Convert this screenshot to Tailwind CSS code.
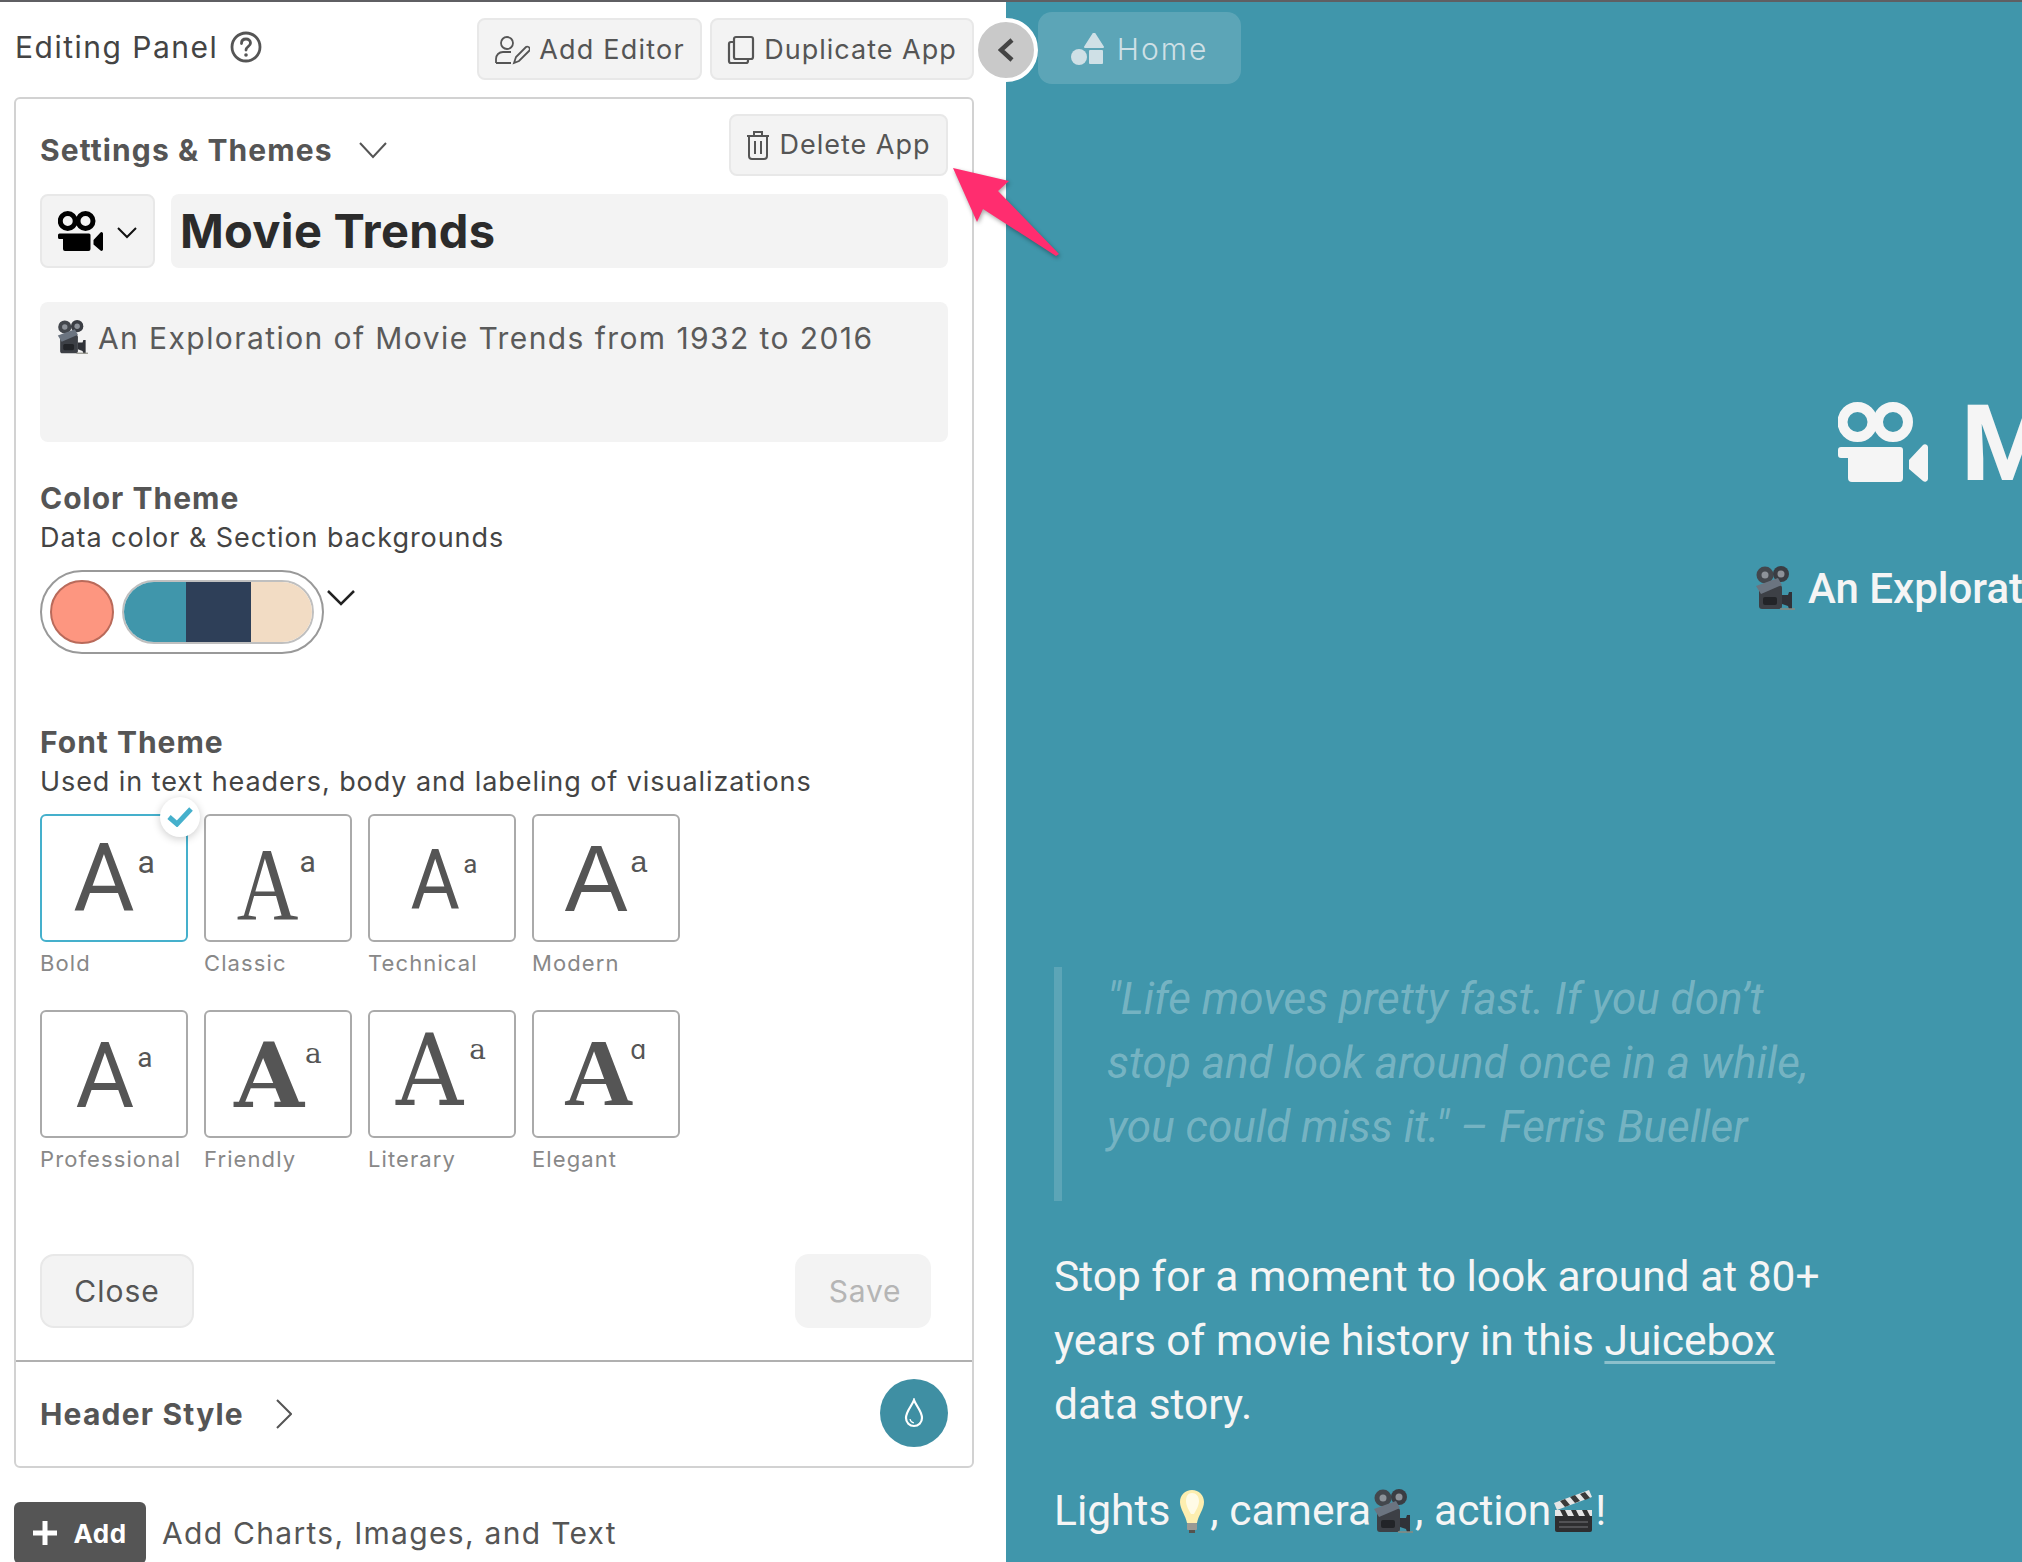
<!DOCTYPE html>
<html lang="en">
<head>
    <meta charset="UTF-8">
    <title>Movie Trends - Editing Panel</title>
    <script src="https://cdn.jsdelivr.net/npm/@tailwindcss/browser@4"></script>
</head>
<body class="h-[1562px] w-[2022px] overflow-hidden bg-white font-['Inter',sans-serif] text-[#555]">
    <!-- reusable pictures -->
    <svg class="absolute h-0 w-0">
        <symbol id="camIcon" viewBox="0 0 90 80">
            <circle cx="19.500" cy="20" r="15" fill="none" stroke="currentColor" stroke-width="10"/>
            <circle cx="55" cy="20" r="15" fill="none" stroke="currentColor" stroke-width="10"/>
            <path d="M3 45h59a3 3 0 0 1 3 3v28a4 4 0 0 1-4 4H14a4 4 0 0 1-4-4V56H3a3 3 0 0 1-3-3v-5a3 3 0 0 1 3-3z" fill="currentColor"/>
            <path d="M71 58l14-15a3 3 0 0 1 5 2v32a3 3 0 0 1-5 2L71 67z" fill="currentColor"/>
        </symbol>
        <symbol id="camEmoji" viewBox="0 0 42 44">
            <circle cx="11" cy="9" r="8.500" fill="#43474d"/>
            <circle cx="27" cy="8" r="8" fill="#3a3d43"/>
            <circle cx="11" cy="9" r="3.500" fill="#8d9299"/>
            <circle cx="27" cy="8" r="3.500" fill="#8d9299"/>
            <path d="M5 24l20-5c2 0 3 1 3 3v18c0 2-1 3-3 3H8c-2 0-3-1-3-3z" fill="#3d4046"/>
            <path d="M2 20l22-8 4 7-21 9z" fill="#6b7480"/>
            <rect x="9" y="31" width="14" height="8" rx="2" fill="#222428"/>
            <path d="M28 29h6l1-3h3v17h-3l-1-3-6-2z" fill="#303238"/>
            <path d="M26 43h15" stroke="#8a8a80" stroke-width="1.500"/>
        </symbol>
        <symbol id="bulbEmoji" viewBox="0 0 30 44">
            <path d="M15 1c7 0 12 5 12 12 0 7-6 14-7 21H10C9 27 3 20 3 13 3 6 8 1 15 1z" fill="#fdeeb0"/>
            <path d="M15 4c4 0 7 3 7 8s-3 9-5 13h-3C12 21 9 17 9 12s2-8 6-8z" fill="#fffbe6"/>
            <rect x="10" y="34" width="10" height="7" rx="1" fill="#9a9a94"/>
            <rect x="12" y="41" width="6" height="3" fill="#55534e"/>
        </symbol>
        <symbol id="clapEmoji" viewBox="0 0 42 44">
            <path d="M2 14L37 1l3 7L5 21z" fill="#e6e6e6"/>
            <path d="M8 12l5 6 5-2-5-6zM18 8l5 6 5-2-5-6zM28 5l5 6 5-2-5-6z" fill="#3a3a3a"/>
            <rect x="3" y="21" width="37" height="22" rx="2" fill="#2e2e30"/>
            <path d="M3 21h37v6H3z" fill="#e6e6e6"/>
            <path d="M8 21l3 6h5l-3-6zM19 21l3 6h5l-3-6zM30 21l3 6h5l-3-6z" fill="#333"/>
            <path d="M7 33h29M7 38h29" stroke="#77777a" stroke-width="1"/>
        </symbol>
    </svg>

    <div class="h-[2px] bg-[#5f5f63]"></div>

    <div class="relative flex h-[1560px]">
        <!-- editing panel -->
        <aside class="flex w-[1006px] shrink-0 flex-col bg-white pl-[14px] pr-[32px]">
            <div class="mt-[16px] flex h-[62px] items-center justify-between">
                <div class="-mt-[4px] ml-[1px] flex items-center gap-[12px] text-[30px] tracking-[1.5px] text-[#444]">
                    <span>Editing Panel</span>
                    <svg class="h-[32px] w-[32px]" viewBox="0 0 32 32" fill="none" stroke="#555" stroke-width="2.800"><circle cx="16" cy="16" r="14"/><path d="M11.500 12.500c0-3 2-4.500 4.500-4.500s4.500 1.500 4.500 4c0 3.500-4.500 3.500-4.500 7" stroke-linecap="round"/><circle cx="16" cy="24" r="1.800" fill="#555" stroke="none"/></svg>
                </div>
                <div class="flex gap-[8px]">
                    <button class="flex h-[62px] w-[225px] items-center justify-center gap-[9px] rounded-[8px] border-2 border-[#e8e8e8] bg-[#f3f3f3] pt-[2px] text-[27px] tracking-[1.2px]">
                        <svg class="h-[30px] w-[36px]" viewBox="0 0 36 30" fill="none" stroke="#555" stroke-width="1.800"><circle cx="13" cy="8" r="6"/><path d="M2 28v-4c0-4 3-7 7-7h8M2 28h15"/><path d="M20 28l2-6 10-10c1-1 3 0 3.500 1s.5 2-.5 3L25 26z"/></svg>
                        Add Editor
                    </button>
                    <button class="flex h-[62px] w-[264px] items-center justify-center gap-[9px] rounded-[8px] border-2 border-[#e8e8e8] bg-[#f3f3f3] pt-[2px] text-[27px] tracking-[1px]">
                        <svg class="h-[30px] w-[28px]" viewBox="0 0 28 30" fill="none" stroke="#555" stroke-width="2.200"><rect x="7" y="2" width="19" height="22" rx="2"/><path d="M7 7H4a2 2 0 0 0-2 2v17a2 2 0 0 0 2 2h15a2 2 0 0 0 2-2v-2"/></svg>
                        Duplicate App
                    </button>
                </div>
            </div>

            <section class="mt-[17px] h-[1371px] rounded-[6px] border-2 border-[#d2d2d2]">
                <div class="h-[1261px] px-[24px] pt-[15px]">
                    <div class="flex h-[62px] items-start justify-between">
                        <div class="mt-[16px] flex items-center gap-[26px]">
                            <h2 class="text-[30px] font-bold leading-[40px] tracking-[1.1px] text-[#555]">Settings &amp; Themes</h2>
                            <svg class="h-[18px] w-[28px]" viewBox="0 0 28 18" fill="none" stroke="#555" stroke-width="2"><path d="M1 2l13 14L27 2"/></svg>
                        </div>
                        <button class="flex h-[62px] w-[219px] items-center justify-center gap-[9px] rounded-[8px] border-2 border-[#e8e8e8] bg-[#f3f3f3] text-[27px] tracking-[1px]">
                            <svg class="h-[30px] w-[24px]" viewBox="0 0 24 30" fill="none" stroke="#555" stroke-width="2"><path d="M1 6h22M8 6V2h8v4M3 6v20a3 3 0 0 0 3 3h12a3 3 0 0 0 3-3V6M9 11v13M15 11v13"/></svg>
                            Delete App
                        </button>
                    </div>

                    <div class="mt-[18px] flex h-[74px] gap-[16px]">
                        <div class="flex w-[115px] items-center gap-[14px] rounded-[8px] border-2 border-[#e8e8e8] bg-[#f3f3f3] pl-[16px] text-black">
                            <svg class="h-[40px] w-[45px]"><use href="#camIcon"/></svg>
                            <svg class="mt-[4px] h-[12px] w-[20px]" viewBox="0 0 20 12" fill="none" stroke="#111" stroke-width="2"><path d="M1 1l9 9 9-9"/></svg>
                        </div>
                        <div class="flex flex-1 items-center rounded-[8px] bg-[#f3f3f3] pl-[9px] text-[47px] font-bold tracking-[0.3px] text-[#2b2b2b]">Movie Trends</div>
                    </div>

                    <div class="mt-[34px] flex h-[140px] items-start gap-[9px] rounded-[8px] bg-[#f3f3f3] pl-[16px] pt-[18px] text-[30px] leading-[36px] tracking-[1.42px] text-[#5a5a5a]">
                        <svg class="h-[34px] w-[33px] shrink-0"><use href="#camEmoji"/></svg>
                        <span>An Exploration of Movie Trends from 1932 to 2016</span>
                    </div>

                    <h3 class="mt-[38px] text-[30px] font-bold leading-[36px] tracking-[1px]">Color Theme</h3>
                    <p class="mt-[4px] text-[27px] leading-[36px] tracking-[0.95px] text-[#444]">Data color &amp; Section backgrounds</p>

                    <div class="mt-[14px] flex items-start gap-[3px]">
                        <div class="flex h-[84px] w-[284px] items-center gap-[8px] rounded-full border-2 border-[#999] pl-[8px]">
                            <div class="h-[64px] w-[64px] rounded-full border-2 border-[#b96a5a] bg-[#fd9680]"></div>
                            <div class="flex h-[64px] w-[192px] overflow-hidden rounded-full border-2 border-black/25">
                                <div class="w-[62px] bg-[#4096ab]"></div>
                                <div class="w-[65px] bg-[#2e3f58]"></div>
                                <div class="w-[61px] bg-[#f2dcc4]"></div>
                            </div>
                        </div>
                        <svg class="mt-[19px] h-[17px] w-[28px]" viewBox="0 0 28 17" fill="none" stroke="#222" stroke-width="2.500"><path d="M1 2l13 13L27 2"/></svg>
                    </div>

                    <h3 class="mt-[70px] text-[30px] font-bold leading-[36px] tracking-[1px]">Font Theme</h3>
                    <p class="mt-[4px] text-[27px] leading-[36px] tracking-[0.92px] text-[#444]">Used in text headers, body and labeling of visualizations</p>

                    <div class="mt-[14px] grid w-[640px] grid-cols-[repeat(4,148px)] gap-x-[16px] gap-y-[32px]">
                        <div>
                            <div class="relative flex h-[128px] items-start justify-center gap-[3px] rounded-[6px] border-2 border-[#45b0cc] pt-[8px] font-['Roboto',sans-serif]">
                                <span class="text-[94px] leading-[110px]">A</span><span class="mt-[18px] text-[32px] leading-[40px]">a</span>
                                <span class="absolute right-[-14px] top-[-19px] flex h-[40px] w-[40px] items-center justify-center rounded-full bg-white shadow-[0_2px_8px_rgba(0,0,0,0.2)]">
                                    <svg class="h-[20px] w-[26px]" viewBox="0 0 26 20" fill="none" stroke="#45b0cc" stroke-width="5"><path d="M2 10l8 7L24 2"/></svg>
                                </span>
                            </div>
                            <p class="mt-[6px] text-[22px] leading-[30px] tracking-[1.1px] text-[#888]">Bold</p>
                        </div>
                        <div>
                            <div class="flex h-[128px] items-start justify-center rounded-[6px] border-2 border-[#aaa] pr-[10px] pt-[14px] font-['Liberation_Serif',serif]">
                                <span class="inline-block scale-x-[0.82] text-[104px] leading-[110px]">A</span><span class="-ml-[6px] mt-[12px] font-['Roboto',sans-serif] text-[30px] leading-[40px]">a</span>
                            </div>
                            <p class="mt-[6px] text-[22px] leading-[30px] tracking-[1.1px] text-[#888]">Classic</p>
                        </div>
                        <div>
                            <div class="flex h-[128px] items-start justify-center gap-[4px] rounded-[6px] border-2 border-[#aaa] pr-[2px] pt-[10px] font-['Roboto',sans-serif]">
                                <span class="inline-block origin-right scale-x-[0.9] text-[84px] leading-[110px]">A</span><span class="mt-[18px] text-[26px] leading-[40px]">a</span>
                            </div>
                            <p class="mt-[6px] text-[22px] leading-[30px] tracking-[1.1px] text-[#888]">Technical</p>
                        </div>
                        <div>
                            <div class="flex h-[128px] items-start justify-center gap-[3px] rounded-[6px] border-2 border-[#aaa] pt-[8px] font-['Liberation_Sans',sans-serif]">
                                <span class="text-[94px] leading-[110px]">A</span><span class="mt-[18px] text-[30px] leading-[40px]">a</span>
                            </div>
                            <p class="mt-[6px] text-[22px] leading-[30px] tracking-[1.1px] text-[#888]">Modern</p>
                        </div>
                        <div>
                            <div class="flex h-[128px] items-start justify-center gap-[3px] rounded-[6px] border-2 border-[#aaa] pt-[10px] font-['Roboto',sans-serif]">
                                <span class="text-[90px] leading-[110px]">A</span><span class="mt-[16px] text-[28px] leading-[40px]">a</span>
                            </div>
                            <p class="mt-[6px] text-[22px] leading-[30px] tracking-[1.1px] text-[#888]">Professional</p>
                        </div>
                        <div>
                            <div class="flex h-[128px] items-start justify-center gap-[1px] rounded-[6px] border-2 border-[#aaa] pt-[8px] font-['DejaVu_Serif',serif] font-bold">
                                <span class="text-[90px] leading-[110px]">A</span><span class="mt-[14px] text-[28px] font-normal leading-[40px]">a</span>
                            </div>
                            <p class="mt-[6px] text-[22px] leading-[30px] tracking-[1.1px] text-[#888]">Friendly</p>
                        </div>
                        <div>
                            <div class="flex h-[128px] items-start justify-center gap-[6px] rounded-[6px] border-2 border-[#aaa] pr-[7px] pt-[4px] font-['DejaVu_Serif',serif]">
                                <span class="inline-block origin-right scale-x-[0.93] text-[100px] leading-[110px]">A</span><span class="mt-[14px] text-[28px] leading-[40px]">a</span>
                            </div>
                            <p class="mt-[6px] text-[22px] leading-[30px] tracking-[1.1px] text-[#888]">Literary</p>
                        </div>
                        <div>
                            <div class="flex h-[128px] items-start justify-center rounded-[6px] border-2 border-[#aaa] pr-[2px] pt-[6px] font-['Liberation_Serif',serif] font-bold">
                                <span class="text-[96px] leading-[110px]">A</span><span class="-ml-[3px] mt-[12px] font-['Inter',sans-serif] text-[26px] font-normal leading-[40px]">ɑ</span>
                            </div>
                            <p class="mt-[6px] text-[22px] leading-[30px] tracking-[1.1px] text-[#888]">Elegant</p>
                        </div>
                    </div>

                    <div class="mt-[80px] flex items-start justify-between pr-[17px]">
                        <button class="h-[74px] w-[154px] rounded-[14px] border-2 border-[#e8e8e8] bg-[#f3f3f3] text-[30px] tracking-[1px]">Close</button>
                        <button class="h-[74px] w-[136px] rounded-[14px] bg-[#f3f3f3] pl-[4px] text-[30px] tracking-[0.8px] text-[#b5b5b5]">Save</button>
                    </div>
                </div>

                <div class="flex h-[106px] items-center justify-between border-t-2 border-[#b0b0b0] px-[24px]">
                    <div class="flex items-center gap-[32px]">
                        <h2 class="text-[30px] font-bold leading-[40px] tracking-[1.2px]">Header Style</h2>
                        <svg class="h-[30px] w-[16px]" viewBox="0 0 16 30" fill="none" stroke="#555" stroke-width="2"><path d="M1 1l14 14L1 29"/></svg>
                    </div>
                    <div class="-mt-[2px] flex h-[68px] w-[68px] items-center justify-center rounded-full bg-[#3f8fa3]">
                        <svg class="h-[30px] w-[22px]" viewBox="0 0 22 30" fill="none" stroke="#fff" stroke-width="2.200"><path d="M11 2c2 6 8 11 8 18a8 8 0 0 1-16 0C3 13 9 8 11 2z"/><path d="M7 21a5 5 0 0 0 4 4" stroke-width="1.200"/></svg>
                    </div>
                </div>
            </section>

            <div class="mt-[34px] flex items-center gap-[16px]">
                <button class="flex h-[62px] w-[132px] items-center justify-center gap-[16px] rounded-[6px] bg-[#555] text-[26px] font-bold tracking-[0.5px] text-white">
                    <svg class="h-[24px] w-[24px]" viewBox="0 0 24 24" fill="none" stroke="#fff" stroke-width="5"><path d="M12 0v24M0 12h24"/></svg>
                    Add
                </button>
                <span class="text-[30px] tracking-[1.3px]">Add Charts, Images, and Text</span>
            </div>
        </aside>

        <!-- story preview -->
        <main class="flex-1 overflow-hidden bg-[#4096ab] font-['Roboto',sans-serif] text-[#f5f5f5]">
            <div class="ml-[32px] mt-[10px] flex h-[72px] w-[203px] items-center justify-center gap-[12px] rounded-[14px] bg-white/15 pt-[2px] font-['Inter',sans-serif] text-[30px] font-light tracking-[2px] text-[#cfe0e6]">
                <svg class="h-[32px] w-[34px]" viewBox="0 0 34 32" fill="#cfe0e6"><circle cx="8" cy="24" r="8"/><rect x="18" y="17" width="14" height="14" rx="1"/><path d="M23 0l9 14H14z" stroke="#cfe0e6" stroke-width="2" stroke-linejoin="round"/></svg>
                Home
            </div>

            <div class="ml-[832px] mt-[318px] flex h-[80px] w-[600px] items-center gap-[33px] whitespace-nowrap">
                <svg class="h-[80px] w-[90px] shrink-0"><use href="#camIcon"/></svg>
                <h1 class="mt-[4px] text-[106px] font-bold leading-[80px]">Movie Trends</h1>
            </div>

            <div class="ml-[748px] mt-[84px] flex h-[44px] items-center gap-[12px] whitespace-nowrap text-[42px] font-medium">
                <svg class="h-[44px] w-[42px] shrink-0"><use href="#camEmoji"/></svg>
                An Exploration of Movie Trends from 1932 to 2016
            </div>

            <blockquote class="ml-[48px] mt-[357px] h-[234px] w-[800px] border-l-[8px] border-white/15 pl-[45px] text-[44px] font-normal italic leading-[64px] text-white/30">
                "Life moves pretty fast. If you don’t<br>stop and look around once in a while,<br>you could miss it." – Ferris Bueller
            </blockquote>

            <p class="ml-[48px] mt-[44px] text-[42.500px] font-normal leading-[64px]">
                Stop for a moment to look around at 80+<br>years of movie history in this <a class="underline decoration-white/40 decoration-[3px] underline-offset-[6px]">Juicebox</a><br>data story.
            </p>
            <p class="ml-[48px] mt-[42px] flex items-center text-[42.500px] font-normal leading-[64px]">
                Lights<svg class="ml-[6px] mr-[2px] h-[44px] w-[32px]"><use href="#bulbEmoji"/></svg>, camera<svg class="h-[44px] w-[44px]"><use href="#camEmoji"/></svg>, action<svg class="h-[44px] w-[44px]"><use href="#clapEmoji"/></svg>!
            </p>
        </main>

        <!-- collapse toggle sits on the panel edge -->
        <button class="absolute left-[974px] top-[16px] flex h-[64px] w-[64px] items-center justify-center rounded-full border-[4px] border-white bg-[#c9c9c9]">
            <svg class="h-[24px] w-[16px]" viewBox="0 0 16 24" fill="none" stroke="#444" stroke-width="4.500"><path d="M14 2L3 12l11 10"/></svg>
        </button>

        <!-- annotation arrow -->
        <svg class="absolute left-[945px] top-[158px] h-[110px] w-[125px]" viewBox="0 0 125 110">
            <path d="M8 8l56 13-11 10 61 63-3 2-73-47-6 13z" fill="#ff2d6f" style="filter: drop-shadow(1px 2px 2px rgba(0,0,0,0.35))"/>
        </svg>
    </div>
</body>
</html>
